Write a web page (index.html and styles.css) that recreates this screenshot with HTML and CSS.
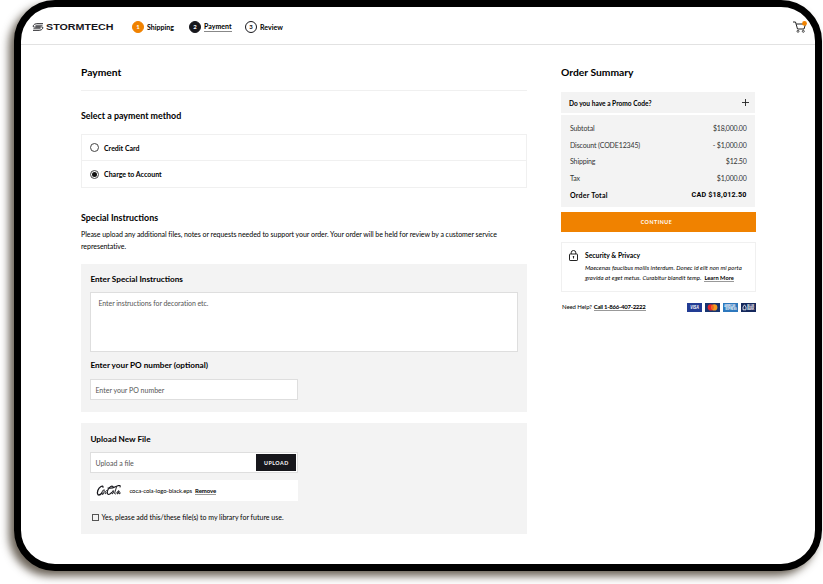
FILE: index.html
```
<!DOCTYPE html>
<html lang="en">
<head>
<meta charset="utf-8">
<title>Stormtech – Payment</title>
<link rel="stylesheet" href="styles.css">
</head>
<body>
<div class="device">
  <header class="topbar">
    <div class="brand">
      <svg class="brand-mark" viewBox="0 0 24 16"><g fill="none" stroke="#17171c" stroke-width="1.800"><path d="M22 1.300H9.500Q5 1.300 2.500 5.200Q1 8.200 5 8.200H17"/><path d="M2 14.700H14.500Q19 14.700 21.500 10.800Q23 7.800 19 7.800H7"/><path d="M21 4.700H7M3 11.300H17" stroke-width="1.400"/></g></svg>
      <svg class="brand-name" viewBox="0 0 68 10"><text x="0" y="7.800" textLength="67.500" lengthAdjust="spacingAndGlyphs">STORMTECH</text></svg>
    </div>
    <nav class="steps">
      <a class="step"><span class="dot done">1</span><span class="step-label">Shipping</span></a>
      <a class="step current"><span class="dot now">2</span><span class="step-label">Payment</span></a>
      <a class="step"><span class="dot">3</span><span class="step-label">Review</span></a>
    </nav>
    <svg class="cart" viewBox="0 0 14 12"><path d="M0 1H2.500L4.500 8H11L12.500 3H3.300" fill="none" stroke="#222" stroke-width="1"/><circle cx="5" cy="10.300" r="1" fill="none" stroke="#222" stroke-width=".8"/><circle cx="10.300" cy="10.300" r="1" fill="none" stroke="#222" stroke-width=".8"/><circle cx="11.500" cy="2.400" r="2.400" fill="#f08200"/></svg>
  </header>
  <main class="content">
    <section class="main-col">
      <h1>Payment</h1>
      <h2 class="method-title">Select a payment method</h2>
      <div class="methods">
        <label class="method"><span class="radio"></span><span>Credit Card</span></label>
        <label class="method"><span class="radio on"></span><span>Charge to Account</span></label>
      </div>
      <h2 class="special-title">Special Instructions</h2>
      <p class="intro">Please upload any additional files, notes or requests needed to support your order. Your order will be held for review by a customer service<br>representative.</p>
      <div class="panel notes">
        <h3>Enter Special Instructions</h3>
        <div class="textarea">Enter instructions for decoration etc.</div>
        <h3>Enter your PO number (optional)</h3>
        <div class="field">Enter your PO number</div>
      </div>
      <div class="panel upload">
        <h3>Upload New File</h3>
        <div class="field picker"><span>Upload a file</span><button>UPLOAD</button></div>
        <div class="file">
          <svg class="cola" viewBox="0 0 25 12"><g fill="none" stroke="#17171c" stroke-linecap="round"><path d="M7 2.200Q7 .5 5 1.500C2 3 .5 8 2 9.700Q3.500 10.700 6 8" stroke-width="1.300"/><path d="M17 1.500Q15.500 .3 13.500 2.500C11 5 10.500 9 12.500 9.500Q14 9.500 15.500 7.500M12 3Q15 4 20 1.500T24 2" stroke-width="1.100"/><path d="M7 5.500Q5 7 6 9T8 7T7 5.500M10.500 5.500Q8.500 6.500 9 8.500Q9.500 9.500 11 7.500M17 5.500Q15.500 7 16 9Q17.500 9 17.800 6M20.500 2L18.500 8.500Q19 10 20.500 8M22.500 5.500Q20.500 7 21.500 9Q22.800 8.500 23 6L23 9L24.500 8" stroke-width=".9"/></g></svg>
          <span>coca-cola-logo-black.eps</span><a class="remove">Remove</a>
        </div>
        <label class="save"><span class="check"></span><span>Yes, please add this/these file(s) to my library for future use.</span></label>
      </div>
    </section>
    <aside class="side-col">
      <h1>Order Summary</h1>
      <div class="promo"><span>Do you have a Promo Code?</span><svg viewBox="0 0 7 7"><path d="M3.500 0V7M0 3.500H7" stroke="#222" stroke-width=".9"/></svg></div>
      <dl class="totals">
        <div><dt>Subtotal</dt><dd>$18,000.00</dd></div>
        <div><dt>Discount (CODE12345)</dt><dd>- $1,000.00</dd></div>
        <div><dt>Shipping</dt><dd>$12.50</dd></div>
        <div><dt>Tax</dt><dd>$1,000.00</dd></div>
        <div class="grand"><dt>Order Total</dt><dd>CAD $18,012.50</dd></div>
      </dl>
      <button class="continue">CONTINUE</button>
      <div class="security">
        <svg class="lock" viewBox="0 0 9 11"><g fill="none" stroke="#222"><rect x=".5" y="4" width="8" height="6.500" rx=".6"/><path d="M2.200 4V2.800a2.300 2.300 0 0 1 4.600 0V4"/><path d="M4.500 6V8.500M3.800 6.600H5.200"/></g></svg>
        <div class="security-text">
          <h4>Security &amp; Privacy</h4>
          <p>Maecenas faucibus mollis interdum. Donec id elit non mi porta<br>gravida at eget metus. Curabitur blandit temp.<a>Learn More</a></p>
        </div>
      </div>
      <div class="help">
        <span>Need Help?</span><a>Call 1-866-407-2222</a>
        <div class="cards">
          <svg viewBox="0 0 15 9"><rect width="15" height="9" fill="#223c94"/><text x="3.200" y="6.300" textLength="8.600" lengthAdjust="spacingAndGlyphs" class="visa">VISA</text></svg>
          <svg viewBox="0 0 15 9"><rect width="15" height="9" fill="#17346f"/><circle cx="5.800" cy="4.400" r="3.100" fill="#e5262b"/><circle cx="9.300" cy="4.400" r="3.100" fill="#f49b20"/><path d="M7.550 1.850a3.100 3.100 0 0 1 0 5.100a3.100 3.100 0 0 1 0-5.100" fill="#f26322"/></svg>
          <svg viewBox="0 0 15 9"><rect width="15" height="9" fill="#2d78bd"/><text x="1.300" y="4.200" textLength="11" lengthAdjust="spacingAndGlyphs" class="tiny">AMERICAN</text><text x="2.500" y="7.200" textLength="11" lengthAdjust="spacingAndGlyphs" class="tiny">EXPRESS</text></svg>
          <svg viewBox="0 0 15 9"><rect width="15" height="9" fill="#14285c"/><path d="M2 6.800V4L3.500 1.800L5 4V6.800Z" fill="none" stroke="#fff" stroke-width=".8"/><text x="6.300" y="4.200" textLength="7" lengthAdjust="spacingAndGlyphs" class="tiny">BLUE</text><text x="6.300" y="7.200" textLength="7" lengthAdjust="spacingAndGlyphs" class="tiny">BANK</text></svg>
        </div>
      </div>
    </aside>
  </main>
</div>
</body>
</html>
```
FILE: styles.css
```
* { box-sizing: border-box; }
body { margin: 0; width: 823px; height: 584px; overflow: hidden; background: #fff; color: #000; font: 7px/12px Lato, "Noto Sans", sans-serif; }
h1, h2, h3, h4, p, dl, dd { margin: 0; }
.device { width: 808px; height: 571px; margin-left: 14px; border: 7px solid #000; border-radius: 41px; background: #fff; box-shadow: -5px 5px 9px rgba(49, 38, 22, .72); }
.topbar { display: flex; align-items: center; height: 38px; padding: 2px 8px 0 11px; border-bottom: 1px solid #e2e2e2; }
.brand { display: flex; align-items: center; gap: 2px; width: 100px; }
.brand-mark { width: 12px; height: 8px; }
.brand-name { width: 68px; height: 10px; font: bold 8.300px "Liberation Sans", sans-serif; fill: #17171c; }
.steps { display: flex; flex: 1; }
.step { display: flex; align-items: center; gap: 3px; width: 57px; font-weight: 700; font-size: 7px; white-space: nowrap; }
.step:nth-child(2) { width: 56px; }
.dot { display: grid; place-items: center; width: 12px; height: 12px; border: 1px solid #17171c; border-radius: 50%; font-size: 6px; line-height: 10px; font-weight: 700; }
.done { background: #f08200; border-color: #f08200; color: #fff; }
.now { background: #17171c; color: #fff; }
.step-label { letter-spacing: .02px; }
.current .step-label { line-height: 9px; border-bottom: 1px solid #888; }
.cart { width: 14px; height: 12px; }
.content { display: grid; grid-template-columns: 446px 195px; gap: 34px; padding: 18px 0 0 60px; }
h1 { height: 28px; font-size: 10.300px; line-height: 18px; font-weight: 700; }
h2 { font-size: 8.900px; line-height: 16px; font-weight: 700; }
h3 { font-size: 8.200px; line-height: 12px; font-weight: 700; }
.main-col h1 { border-bottom: 1px solid #f0f0f0; }
.method-title { margin-top: 17px; }
.methods { margin-top: 10px; border: 1px solid #f0f0f0; }
.method { display: flex; align-items: center; height: 25px; padding-left: 8px; gap: 5px; font-weight: 700; }
.method + .method { height: 27px; border-top: 1px solid #f0f0f0; }
.radio { display: grid; place-items: center; width: 9px; height: 9px; border: 1px solid #444; border-radius: 50%; }
.on::after { content: ""; width: 5px; height: 5px; border-radius: 50%; background: #111; }
.special-title { margin-top: 22px; }
.intro { margin-top: 2px; white-space: nowrap; letter-spacing: -.045px; }
.panel { background: #f3f3f3; padding: 9px 9.400px 0; }
.notes { height: 148px; margin-top: 12px; }
.textarea { height: 60px; width: 428px; margin: 7px 0 7px; padding: 4px 7px; border: 1px solid #dedede; background: #fff; color: #555; letter-spacing: -.06px; }
.field { display: flex; align-items: center; width: 208px; height: 21px; margin-top: 8px; padding: 0 1px 0 4px; border: 1px solid #dedede; background: #fff; color: #555; }
.upload { height: 111px; margin-top: 11px; padding-top: 10px; }
.upload .field { margin-top: 7px; }
.picker { justify-content: space-between; }
button { display: block; border: 0; padding: 0; color: #fff; font: bold 5.300px Lato, sans-serif; letter-spacing: .5px; text-align: center; }
.picker button { width: 40px; height: 17px; background: #17171c; }
.file { display: flex; align-items: center; height: 21px; margin-top: 7px; width: 208px; background: #fff; padding-left: 6px; font-size: 6px; letter-spacing: -.09px; }
.cola { width: 25px; height: 12px; margin-right: 8px; }
.remove, .help a, .security a { font-weight: 700; line-height: 7px; border-bottom: 1px solid #999; }
.remove { margin-left: 3px; }
.save { display: flex; align-items: center; gap: 2.500px; margin: 10px 0 0 1.500px; white-space: nowrap; }
.check { width: 7px; height: 7px; border: 1px solid #555; }
.promo { display: flex; align-items: center; justify-content: space-between; height: 21px; margin: 1px 1px 0 0; padding: 0 6px 0 8px; background: #f3f3f3; font-weight: 700; font-size: 6.600px; }
.promo svg { width: 7px; height: 7px; }
.totals { height: 92px; margin: 2px 1px 0 0; padding: 5px 8.500px 0 9px; background: #f3f3f3; color: #333; }
.totals div { display: flex; justify-content: space-between; height: 16.700px; line-height: 16.700px; letter-spacing: -.13px; }
.totals dd { letter-spacing: -.22px; }
.totals .grand { color: #000; font-weight: 700; letter-spacing: .25px; }
.totals .grand dd { font-family: Roboto, sans-serif; font-size: 7.200px; letter-spacing: .15px; }
.continue { width: 195px; height: 20px; margin-top: 5px; padding-right: 4px; background: #f08200; }
.security { display: flex; gap: 7px; height: 50px; margin-top: 10px; padding: 7px 0 0 7px; border: 1px solid #f0f0f0; white-space: nowrap; }
.lock { width: 9px; height: 11px; flex: none; }
.security h4 { font-size: 6.800px; line-height: 11px; }
.security p { font-size: 6px; line-height: 10px; font-style: italic; margin-top: 2px; letter-spacing: .04px; }
.security a { display: inline-block; margin-left: 3px; font-size: 5.700px; font-style: normal; }
.help { display: flex; align-items: center; height: 10px; margin-top: 10px; font-size: 6px; white-space: nowrap; padding-left: 1px; letter-spacing: -.08px; }
.help a { margin-left: 2px; letter-spacing: -.25px; }
.cards { display: flex; gap: 3px; margin-left: auto; letter-spacing: 0; }
.cards svg { width: 15px; height: 9px; overflow: visible; }
.visa { font: italic bold 5px "Liberation Sans", sans-serif; fill: #fff; }
.tiny { font: bold 2.600px "Liberation Sans", sans-serif; fill: #fff; }
```
